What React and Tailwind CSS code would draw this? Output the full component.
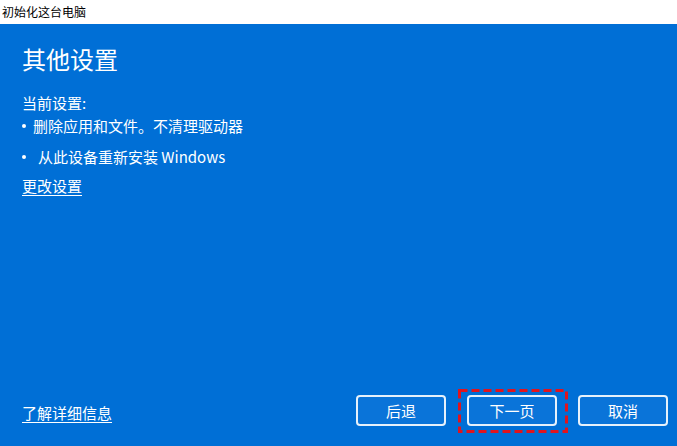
import React from "react";

const font = { fontFamily: '"Microsoft YaHei", "Noto Sans CJK SC", sans-serif' };

const Button = ({ label }) => (
    <button className="w-[90px] h-[31px] rounded-[4px] border-2 border-white/90 bg-[#0a74d9] text-white text-[15px] leading-none flex items-center justify-center">
        {label}
    </button>
);

const Bullet = () => <span className="w-[4px] h-[4px] rounded-full bg-white shrink-0" />;

const App = () => {
    return (
        <div className="w-[677px] h-[446px] flex flex-col bg-white" style={font}>
            <div className="h-[24px] flex items-center pl-[2px] text-[12px] text-black">
                初始化这台电脑
            </div>
            <div className="flex-1 bg-[#006fd6] text-white flex flex-col px-[22px] pb-[14px]">
                <h1 className="text-[24px] leading-none mt-[23px]">其他设置</h1>
                <div className="text-[15px] leading-none mt-[24px]">当前设置:</div>
                <ul className="text-[15px] leading-none mt-[8px] flex flex-col gap-[16px]">
                    <li className="flex items-center gap-[7px]"><Bullet /><span>删除应用和文件。不清理驱动器</span></li>
                    <li className="flex items-center gap-[7px]"><Bullet /><span className="pl-[5px]">从此设备重新安装 Windows</span></li>
                </ul>
                <a className="text-[15px] leading-none mt-[14px] underline underline-offset-[3px] w-fit">更改设置</a>
                <div className="mt-auto flex items-center">
                    <a className="text-[15px] leading-none underline underline-offset-[3px] mb-[3px]">了解详细信息</a>
                    <div className="ml-auto flex items-center gap-[21px] mr-[-13px] mb-[6px]">
                        <Button label="后退" />
                        <div className="relative">
                            <svg className="absolute left-[-9px] top-[-6px]" width="110" height="44" viewBox="0 0 110 44">
                                <rect x="1.5" y="1.5" width="107" height="41" fill="none" stroke="#e0141e" strokeWidth="3" strokeDasharray="8 4" />
                            </svg>
                            <Button label="下一页" />
                        </div>
                        <Button label="取消" />
                    </div>
                </div>
            </div>
        </div>
    );
};

export default App;
